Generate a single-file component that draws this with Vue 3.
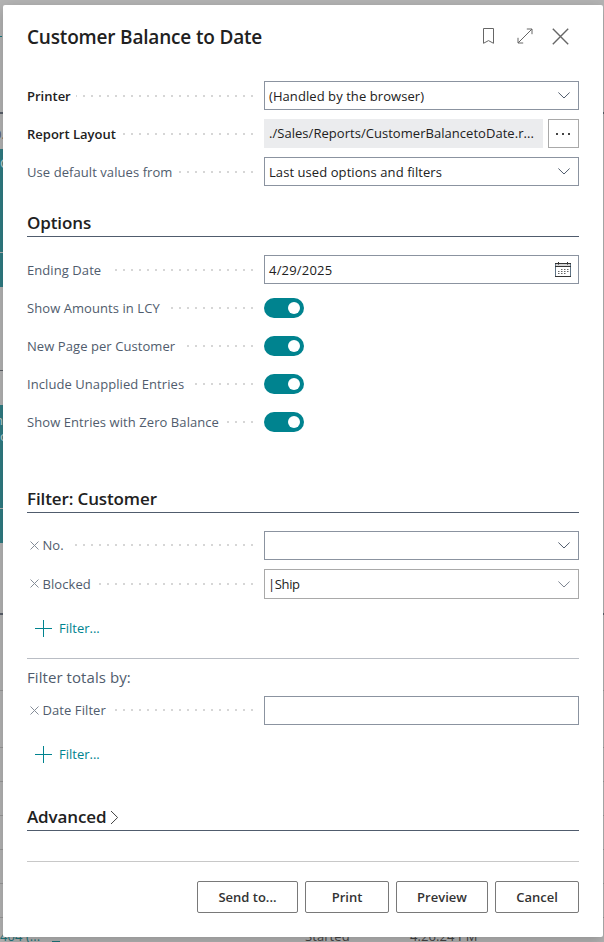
<script setup>
const general = [
  { label: 'Printer', strong: true, dots: 177, type: 'select', value: '(Handled by the browser)' },
  { label: 'Report Layout', strong: true, dots: 130, type: 'lookup', value: './Sales/Reports/CustomerBalancetoDate.r...' },
  { label: 'Use default values from', dots: 74, type: 'select', value: 'Last used options and filters' },
]
const options = [
  { label: 'Ending Date', dots: 138, type: 'date', value: '4/29/2025' },
  { label: 'Show Amounts in LCY', dots: 82, type: 'toggle' },
  { label: 'New Page per Customer', dots: 66, type: 'toggle' },
  { label: 'Include Unapplied Entries', dots: 58, type: 'toggle' },
  { label: 'Show Entries with Zero Balance', dots: 26, type: 'toggle' },
]
const filters = [
  { label: 'No.', dots: 178, type: 'select', value: '', removable: true },
  { label: 'Blocked', dots: 154, type: 'select', value: '|Ship', removable: true, tall: true },
]
const totals = [{ label: 'Date Filter', dots: 138, type: 'text', value: '', removable: true }]
const groups = [
  { key: 'general', rows: general },
  { key: 'options', title: 'Options', rows: options },
  { key: 'filters', title: 'Filter: Customer', rows: filters, add: true },
  { key: 'totals', subtitle: 'Filter totals by:', rows: totals, add: true },
]
const buttons = [
  { text: 'Send to...', cls: 'send' },
  { text: 'Print', cls: 'print' },
  { text: 'Preview', cls: 'preview' },
  { text: 'Cancel', cls: 'cancel' },
]
</script>

<template>
  <div class="page">
    <div class="backdrop">
      <i class="edge teal-line"></i>
      <i class="edge head-line"></i>
      <span class="peek peek-a">0.</span>
      <i class="edge tile tile-one"></i>
      <span class="peek peek-b">C</span>
      <i class="edge mid-line"></i>
      <i class="edge tile tile-two"></i>
      <span class="peek peek-c">n</span>
      <span class="peek peek-d">o</span>
      <i class="edge low-line"></i>
      <i class="edge rows"></i>
      <span class="peek under link">404 (...</span>
      <i class="edge dash"></i>
      <span class="peek under state">Started</span>
      <span class="peek under time">4:26:24 PM</span>
    </div>

    <main class="dialog">
      <header class="head">
        <h1>Customer Balance to Date</h1>
        <div class="tools">
          <svg class="bookmark" width="13" height="18" viewBox="0 0 13 18"><path d="M1.5 1.5H11.5V16.3L6.5 13.6L1.5 16.3Z" /></svg>
          <svg class="expand" width="16" height="16" viewBox="0 0 16 16"><path d="M1 15L15 1M9.8 1H15V6.2M1 9.8V15H6.2" /></svg>
          <svg class="close" width="17" height="17" viewBox="0 0 17 17"><path d="M.8.8L16.2 16.2M16.2.8L.8 16.2" /></svg>
        </div>
      </header>

      <section v-for="g in groups" :key="g.key" :class="['group', g.key]">
        <h2 v-if="g.title">{{ g.title }}</h2>
        <h3 v-if="g.subtitle">{{ g.subtitle }}</h3>
        <div class="fields">
          <div v-for="r in g.rows" :key="r.label" :class="['row', { tall: r.tall }]">
            <div :class="['caption', { strong: r.strong, removable: r.removable }]">
              <svg v-if="r.removable" class="remove" width="9" height="9" viewBox="0 0 9 9"><path d="M.5.5L8.5 8.5M8.5.5L.5 8.5" /></svg>
              <span class="label">{{ r.label }}</span>
              <span class="leader" :style="{ width: r.dots + 'px' }"></span>
            </div>
            <span v-if="r.type === 'toggle'" class="toggle"><i></i></span>
            <div v-else-if="r.type === 'lookup'" class="lookup">
              <div class="readonly">{{ r.value }}</div>
              <div class="more"><i></i><i></i><i></i></div>
            </div>
            <div v-else :class="['input', r.type]">
              <span>{{ r.value }}</span>
              <svg v-if="r.type === 'select'" class="chevron" width="12" height="7" viewBox="0 0 12 7"><path d="M.4.5L6 6L11.6.5" /></svg>
              <svg v-if="r.type === 'date'" class="calendar" width="16" height="15" viewBox="0 0 16 15">
                <path class="side" d="M.5 1V14M15.5 1V14" />
                <path class="frame" d="M0 14.5H16M0 1.5H16M0 4.5H16M3.5 0V3M12.5 0V3" />
                <path class="band" d="M1 3H15" />
                <path class="days" d="M6 7.5H14M3 9.5H14M3 11.5H12" />
              </svg>
            </div>
          </div>
        </div>
        <div v-if="g.add" class="add">
          <svg width="17" height="17" viewBox="0 0 17 17"><path d="M8.5 0V17M0 8.5H17" /></svg>
          <span>Filter...</span>
        </div>
      </section>

      <h2 class="advanced"><span>Advanced</span><svg width="9" height="15" viewBox="0 0 9 15"><path d="M1 1L7.6 7.5L1 14" /></svg></h2>

      <footer class="actions">
        <button v-for="b in buttons" :key="b.text" :class="b.cls">{{ b.text }}</button>
      </footer>
    </main>
  </div>
</template>

<style>
body { margin: 0; }
</style>

<style scoped>
* { box-sizing: border-box; }
.page {
  position: relative;
  width: 604px;
  height: 942px;
  padding: 5px 1px 5px 3px;
  overflow: hidden;
  background: #b4b4b4;
  font-family: "Open Sans", "Noto Sans", sans-serif;
  font-size: 13px;
  letter-spacing: .07px;
  color: #212121;
}
svg { display: block; flex: none; fill: none; stroke: #505c6d; }
.backdrop { position: absolute; inset: 0; }
.edge { position: absolute; left: 0; width: 100%; }
.teal-line { top: 36px; width: 2px; height: 1px; background: #16797f; }
.head-line { top: 112px; height: 2px; background: #5b606b; }
.tile { width: 3px; height: 138px; background: linear-gradient(#307d84 103px, #b4b4b4 103px, #b4b4b4 104px, #307d84 104px); }
.tile-one { top: 149px; }
.tile-two { top: 405px; }
.mid-line { top: 370px; width: 3px; height: 1px; background: #5b5f66; }
.low-line { top: 613px; height: 2px; background: #5b606b; }
.rows { top: 690px; height: 1px; background: #999; box-shadow: 0 57px #999, 0 91px #999, 0 125px #999, 0 159px #999, 0 193px #999, 0 227px #999; }
.peek { position: absolute; line-height: 18px; color: #c4d4d5; white-space: nowrap; }
.peek-a { top: 125px; left: -6px; color: #555; }
.peek-b { top: 154px; left: 0; }
.peek-c { top: 411px; left: -5px; }
.peek-d { top: 427px; left: 0; }
.under { top: 927px; color: #444; }
.peek.link { left: 0; color: #1f747a; }
.dash { left: 52px; top: 941px; width: 8px; height: 1px; background: #1f747a; }
.state { left: 305px; }
.time { left: 410px; }

.dialog {
  position: relative;
  height: 932px;
  padding: 0 24px;
  background: #fff;
  border-radius: 2px;
  box-shadow: 0 4px 14px rgba(0, 0, 0, .2);
}
.head { display: flex; align-items: center; justify-content: space-between; height: 64px; }
h1, h2, h3 { margin: 0; font-weight: 600; white-space: nowrap; }
h1 { font-size: 19px; line-height: 26px; letter-spacing: -.18px; }
.tools { display: flex; align-items: center; padding: 0 10px 2px 0; }
.tools svg { stroke: #666; }
.expand { margin-left: 22px; }
.close { margin-left: 19px; stroke-width: 1.4; }

h2 {
  height: 28px;
  border-bottom: 1px solid #505c6d;
  font-size: 17px;
  line-height: 27px;
  letter-spacing: -.12px;
}
h3 { height: 24px; font-size: 15px; line-height: 22px; font-weight: 400; color: #505c6d; }
.fields { display: flex; flex-direction: column; gap: 9px; }
.row { display: flex; align-items: center; height: 29px; }
.row.tall { height: 30px; }
.general { padding-top: 12px; }
.options { padding-top: 23px; }
.filters { padding-top: 49px; }
.options .fields, .filters .fields { padding-top: 18px; }
.totals { margin-top: 21px; padding-top: 7px; border-top: 1px solid #b9bdc4; }
.totals .fields { padding-top: 6px; }

.caption { position: relative; display: flex; align-items: center; flex: none; width: 237px; height: 100%; color: #505c6d; }
.strong { color: #212121; font-weight: 600; letter-spacing: 0; }
.label { flex: none; white-space: nowrap; }
.removable { padding: 0 0 1px 3px; letter-spacing: .08px; }
.remove { margin-right: 3.5px; stroke: #858d98; }
.leader {
  position: absolute;
  right: 11px;
  height: 2px;
  background: repeating-linear-gradient(to left, #d6d6d6 0 2px, transparent 2px 8px);
}
.input, .lookup { display: flex; flex: 1; min-width: 0; height: 100%; align-items: center; }
.input { justify-content: space-between; padding: 0 8px 0 4px; border: 1px solid #8b93a0; }
.input.date { padding-right: 7px; letter-spacing: .2px; }
.tall .input { padding-left: 3px; border-color: #a9a9a9; letter-spacing: -.35px; }
.tall .chevron { stroke: #7c8490; }
.input span, .readonly { white-space: nowrap; }
.lookup { gap: 5px; }
.readonly { flex: 1; height: 100%; padding-left: 5px; line-height: 29px; letter-spacing: .04px; background: #ebecee; }
.more { display: flex; align-items: center; justify-content: center; gap: 4px; width: 31px; height: 29px; padding-right: 1px; border: 1px solid #a9a9a9; }
.more i { width: 2px; height: 2px; background: #444; }
.calendar .frame { stroke: #333; }
.calendar .side { stroke: #5f7486; }
.calendar .band { stroke: #aaa; }
.calendar .days { stroke: #666; stroke-dasharray: 1.5 1.5; }
.toggle { display: flex; justify-content: flex-end; align-items: center; width: 40px; height: 20px; padding-right: 4px; border-radius: 10px; background: #00838f; }
.toggle i { width: 12px; height: 12px; border-radius: 50%; background: #fff; }
.add { display: flex; align-items: center; gap: 7px; height: 18px; margin: 20px 0 0 8px; color: #00838f; letter-spacing: 0; }
.add svg { stroke: #00838f; }
.advanced { display: flex; margin-top: 40px; }
.advanced svg { margin: 7px 0 0 4px; stroke: #444; }
.actions { display: flex; justify-content: flex-end; gap: 7px; margin-top: 30px; padding-top: 19px; border-top: 1px solid #c8c8c8; }
button { width: 84px; height: 32px; padding: 0; border: 1px solid #797979; border-radius: 2px; background: #fff; color: #333; font: 600 13px/28px "Open Sans", sans-serif; }
.send { width: 101px; }
.preview { width: 92px; }
</style>
